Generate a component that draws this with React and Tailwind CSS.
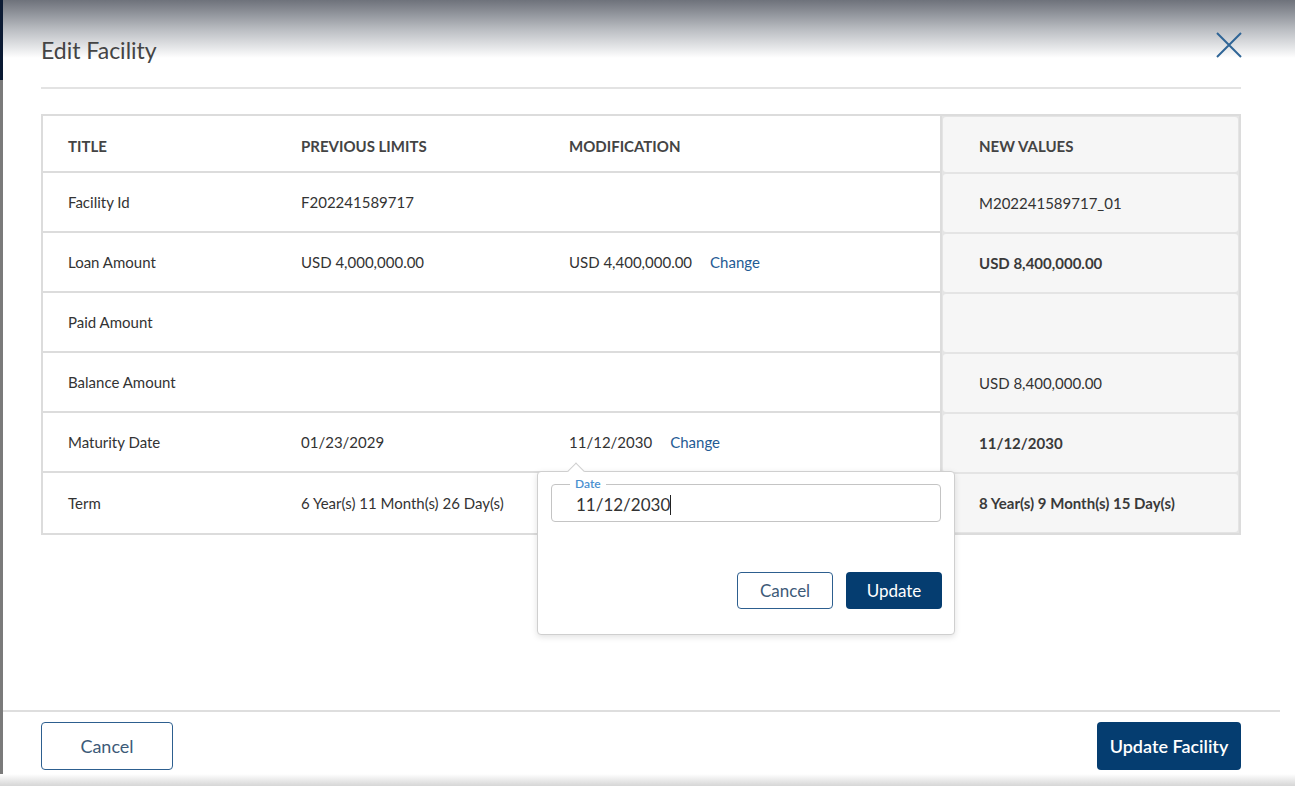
import React from 'react';

const rows = [
  { title: 'Facility Id', prev: 'F202241589717', mod: '', change: false, next: 'M202241589717_01', bold: false },
  { title: 'Loan Amount', prev: 'USD 4,000,000.00', mod: 'USD 4,400,000.00', change: true, next: 'USD 8,400,000.00', bold: true },
  { title: 'Paid Amount', prev: '', mod: '', change: false, next: '', bold: false },
  { title: 'Balance Amount', prev: '', mod: '', change: false, next: 'USD 8,400,000.00', bold: false },
  { title: 'Maturity Date', prev: '01/23/2029', mod: '11/12/2030', change: true, next: '11/12/2030', bold: true },
  { title: 'Term', prev: '6 Year(s) 11 Month(s) 26 Day(s)', mod: '', change: false, next: '8 Year(s) 9 Month(s) 15 Day(s)', bold: true },
];

const DatePopover = () => (
  <div className="absolute left-[494px] top-[355px] w-[418px] h-[164px] bg-white border border-[#cfcfcf] rounded-[4px] shadow-[0_2px_6px_rgba(0,0,0,0.12)] z-20">
    <div className="absolute -top-[7px] left-[32px] w-[12px] h-[12px] bg-white border-l border-t border-[#cfcfcf] rotate-45" />
    <div className="relative mx-[13px] mt-[12px] h-[38px] border border-[#c4c4c4] rounded-[4px] px-[24px] pt-[10px]">
      <span className="absolute -top-[8px] left-[18px] bg-white px-[5px] text-[12px] leading-[14px] font-semibold text-[#4a90d0]">Date</span>
      <div className="flex items-center text-[17px] leading-[20px] text-[#333]">
        11/12/2030<span className="w-px h-[20px] bg-[#222]" />
      </div>
    </div>
    <div className="flex justify-end gap-[13px] mt-[50px] mr-[12px]">
      <button className="w-[96px] h-[37px] border border-[#2d5f8f] rounded-[4px] text-[17px] text-[#3d5a78] bg-white">Cancel</button>
      <button className="w-[96px] h-[37px] rounded-[4px] text-[17px] text-white bg-[#053d70]">Update</button>
    </div>
  </div>
);

export default function App() {
  return (
    <div className="relative w-[1295px] h-[786px] bg-white overflow-hidden text-[#333]" style={{ fontFamily: '"Source Sans Pro", Lato, "Noto Sans", sans-serif' }}>
      <div className="absolute inset-x-0 top-0 h-[58px] bg-gradient-to-b from-[#6e727b] via-[#b9bcc1] to-white pointer-events-none" />
      <div className="absolute left-0 top-0 w-[3px] h-[80px] bg-[#0b1a33]" />
      <div className="absolute left-0 top-[80px] w-[3px] h-[706px] bg-[#7a7a7a]" />
      <div className="absolute inset-x-0 bottom-0 h-[12px] bg-gradient-to-b from-white to-[#d6d6d6]" />

      <div className="relative flex flex-col h-full">
        <div className="mx-[41px] mr-[54px] flex items-center justify-between h-[89px] pt-[14px] border-b-2 border-[#e3e3e3]">
          <h1 className="text-[23px] text-[#444] font-normal">Edit Facility</h1>
          <svg width="26" height="26" viewBox="0 0 26 26" className="-mt-[12px] -mr-[1px]">
            <path d="M1 1 L25 25 M25 1 L1 25" stroke="#2f6596" strokeWidth="2" fill="none" />
          </svg>
        </div>

        <div className="relative mt-[25px] ml-[41px] mr-[54px] flex border-2 border-[#dcdcdc]">
          <div className="flex-1 flex flex-col">
            <div className="h-[57px] flex items-center border-b-2 border-[#dcdcdc] text-[15px] font-bold text-[#444] pt-[5px]">
              <div className="w-[258px] pl-[25px]">TITLE</div>
              <div className="w-[268px]">PREVIOUS LIMITS</div>
              <div className="flex-1">MODIFICATION</div>
            </div>
            {rows.map((r, i) => (
              <div key={r.title} className={`h-[60px] flex items-center text-[15px] pt-[1px] ${i < rows.length - 1 ? 'border-b-2 border-[#dcdcdc]' : ''}`}>
                <div className="w-[258px] pl-[25px]">{r.title}</div>
                <div className="w-[268px]">{r.prev}</div>
                <div className="flex-1 flex items-center gap-[18px]">
                  {r.mod && <span>{r.mod}</span>}
                  {r.change && <span className="text-[#1f5b94]">Change</span>}
                </div>
              </div>
            ))}
          </div>
          <div className="w-[299px] flex flex-col border-l-2 border-[#dcdcdc] p-[1px] gap-[2px] bg-[#e4e4e4]">
            <div className="h-[55px] flex items-center pl-[36px] pt-[4px] bg-[#f6f6f6] rounded-[3px] text-[15px] font-bold text-[#444]">NEW VALUES</div>
            {rows.map((r) => (
              <div key={r.title} className={`h-[58px] flex items-center pl-[36px] bg-[#f6f6f6] rounded-[3px] text-[15px] ${r.bold ? 'font-bold text-[#3a3a3a]' : ''}`}>{r.next}</div>
            ))}
          </div>
          <DatePopover />
        </div>

        <div className="mt-auto mb-[16px] ml-[3px] mr-[15px] border-t-2 border-[#dedede] pt-[10px] pl-[38px] pr-[39px] flex justify-between">
          <button className="w-[132px] h-[48px] border border-[#2d5f8f] rounded-[4px] text-[18px] text-[#3d5a78] bg-white">Cancel</button>
          <button className="w-[144px] h-[48px] rounded-[4px] text-[18px] text-white bg-[#053d70] font-semibold">Update Facility</button>
        </div>
      </div>
    </div>
  );
}
